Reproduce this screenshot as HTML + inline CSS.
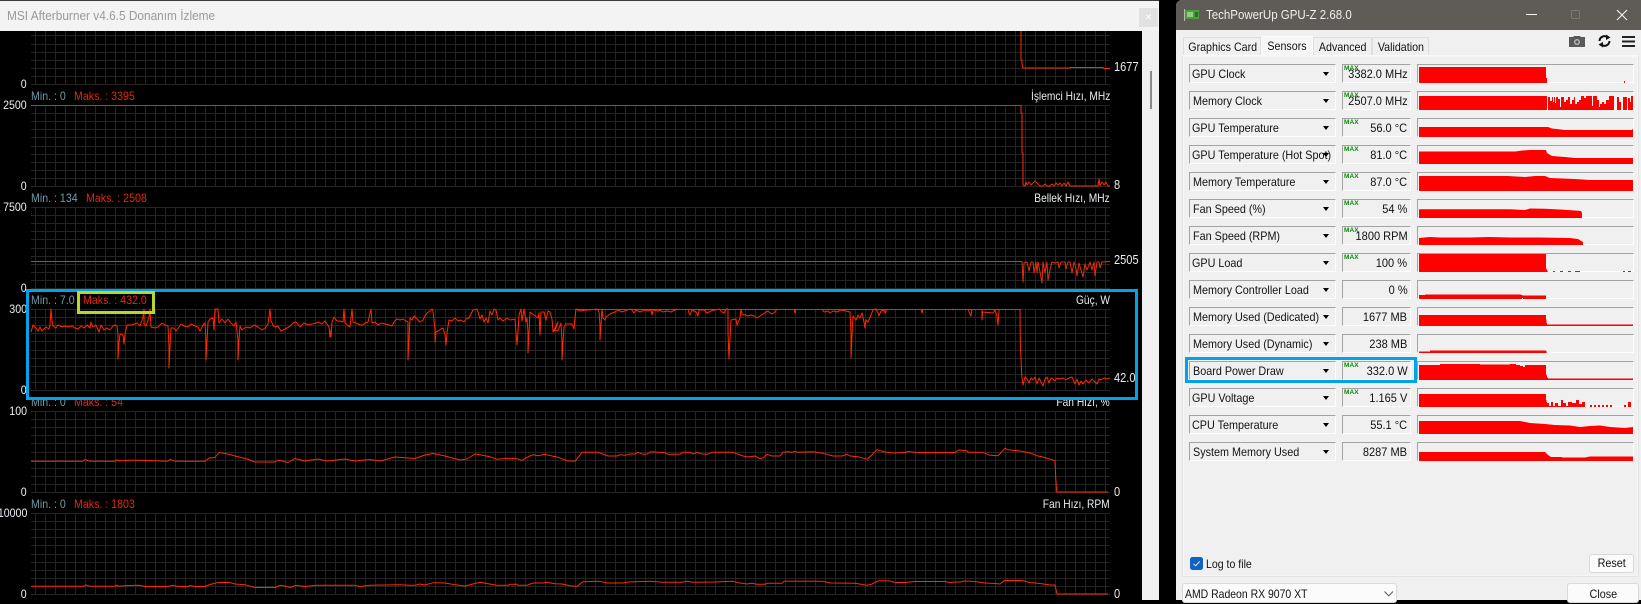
<!DOCTYPE html>
<html><head><meta charset="utf-8"><title>MSI Afterburner / GPU-Z</title>
<style>
html,body{margin:0;padding:0;width:1641px;height:600px;overflow:hidden;background:#000;font-family:"Liberation Sans",sans-serif}
.a{position:absolute}
.t{position:absolute;white-space:nowrap;line-height:14px;font-size:12px;transform:scaleX(.885);transform-origin:left center}
.rt{transform-origin:right center;text-align:right}
.nm{transform:scaleX(.85)}
.mn{color:#6f9aa6}.mx{color:#e4260c}.w{color:#e9eef2}
.r{position:absolute;left:0;width:1641px;height:19px}
.d,.v,.g{position:absolute;top:0;height:19px;box-sizing:border-box;border-top:1.5px solid #a3a3a3;border-left:1.5px solid #a3a3a3;border-right:1px solid #fff;border-bottom:1px solid #fff;background:#f0f0f0}
.d{left:1189px;width:147px}.v{left:1342px;width:69px}.g{left:1417px;width:217px}
.d i{position:absolute;left:133px;top:7px;width:0;height:0;border-left:3.5px solid transparent;border-right:3.5px solid transparent;border-top:4px solid #000}
.l{position:absolute;left:2px;top:1px;line-height:16px;font-size:12px;color:#111;white-space:nowrap;transform:scaleX(.9);transform-origin:left center}
.n{position:absolute;right:2.5px;top:1px;line-height:16px;font-size:12px;color:#111;white-space:nowrap;transform:scaleX(.92);transform-origin:right center}
.m{position:absolute;left:1px;top:0;font-size:6.5px;line-height:8px;font-weight:bold;color:#0a8a0a;letter-spacing:.1px}
.tab{position:absolute;box-sizing:border-box;background:#f0f0f0;border:1px solid #dedede;border-bottom:none;font-size:12px;color:#111;text-align:center;line-height:18px;white-space:nowrap}
.tab span{display:inline-block;transform:scaleX(.89)}
</style></head><body>

<!-- MSI window -->
<div class="a" style="left:0;top:0;width:1159px;height:600px;background:#000"></div>
<div class="a" style="left:0;top:0;width:1159px;height:1px;background:#3a3a3a"></div>

<svg class="a" style="left:0;top:0" width="1142" height="600" viewBox="0 0 1142 600">
<defs>
<pattern id="vl" patternUnits="userSpaceOnUse" x="35" y="0" width="10" height="100"><rect width="1" height="100" fill="#242424"/></pattern>
<g id="grid" shape-rendering="crispEdges">
<rect x="35" y="0" width="1071" height="81" fill="url(#vl)"/>
<path d="M31 .5H1110M31 8.5H1110M31 16.5H1110M31 24.5H1110M31 32.5H1110M31 41.5H1110M31 49.5H1110M31 57.5H1110M31 65.5H1110M31 73.5H1110M31 81.5H1110" stroke="#242424" stroke-width="1" fill="none"/>
</g>
</defs>
<use href="#grid" y="3"/><use href="#grid" y="105"/><use href="#grid" y="207"/><use href="#grid" y="309"/><use href="#grid" y="411"/><use href="#grid" y="513"/>
<g fill="none" stroke-width="1" shape-rendering="crispEdges">
<path d="M31 105.5H1021" stroke="#6b6a14"/>
<path d="M575 309.5H1021" stroke="#6b6a14"/>
</g>
<g fill="none" stroke="#ff2a00" stroke-width="1" stroke-linejoin="round">
<path d="M1021 31V60H1022V64L1023 68H1070V67.5H1103L1104 68.5H1110"/>
<path d="M1021 105V113H1022V153H1023V185L1025 186 1026 182 1027 185 1029 182 1031 185 1033 183 1035 181 1037 183 1038 184 1040 186 1043 186 1045 184 1047 186 1050 186 1052 184 1054 186 1056 183 1058 185 1060 183 1062 186 1064 183 1066 186 1068 182 1070 186 1098 186 1099 179 1100 186 1102 182 1104 185 1106 182 1108 186 1110 186"/>
<path stroke="#e0300f" d="M31 261.5H1022L1023 282 1024 263 1027 262 1029 271 1031 262 1033 262 1034 273 1036 262 1037 273 1038 262 1040 272 1042 283 1043 262 1045 273 1047 262 1048 280 1050 270 1052 262 1055 263 1058 262 1059 268 1061 262 1065 262 1066 269 1068 262 1070 262 1072 273 1074 262 1076 268 1077 276 1079 263 1081 270 1083 277 1085 264 1087 270 1090 262 1092 270 1094 262 1095 276 1097 262 1099 262 1100 268 1102 262 1110 261.5"/>
<path d="M31 332 33 325 36 328 38 331 40 327 42 331 44 329 46 327 49 329 50 325 51 309 52 321 53 326 56 328 58 325 62 327 65 326 68 327 72 326 75 328 78 329 81 326 84 328 87 325 90 328 91 322 93 327 96 325 99 332 101 325 104 330 107 328 110 330 113 326 115 325 117 326 118 335 118 359 119 343 120 334 123 335 124 344 125 334 127 325 132 325 137 323 140 326 143 317 144 309 144 324 146 326 149 317 150 309 151 327 155 328 158 327 162 323 165 325 168 326 169 347 169 368 170 347 171 328 174 328 176 331 179 327 181 324 184 326 188 327 191 324 195 326 198 327 200 331 203 325 205 323 206 341 206 360 207 341 208 322 210 319 213 318 214 330 215 309 218 309 219 323 222 319 225 323 228 319 231 323 234 326 236 322 238 340 238 360 239 340 240 326 242 330 246 327 250 328 254 325 258 327 262 330 265 328 268 324 270 309 271 321 274 327 278 326 281 331 285 329 289 327 293 323 296 322 300 327 304 323 308 325 312 324 316 323 319 322 322 324 325 321 327 324 329 327 330 337 331 330 331 337 332 322 334 317 337 321 340 321 343 322 344 309 345 323 348 326 350 327 352 309 353 322 356 323 360 325 363 325 365 323 368 322 371 309 372 323 375 322 378 325 382 323 385 324 389 325 392 326 394 322 397 319 400 320 403 319 406 321 408 322 408 340 408 360 409 340 410 318 412 320 414 316 417 319 420 322 423 320 425 316 427 313 430 311 432 309 433 311 435 330 435 342 436 332 438 331 441 329 443 328 445 335 446 345 447 333 449 320 452 321 455 318 458 321 461 320 464 322 466 319 469 318 471 314 473 310 477 309 478 312 480 319 482 315 484 322 486 318 488 323 490 311 492 315 494 309 496 310 498 320 500 318 503 321 507 318 510 320 515 319 516 332 517 345 518 332 519 315 521 309 522 321 524 309 526 322 527 318 528 333 528 353 529 333 530 312 534 315 538 318 539 313 540 335 541 312 544 312 546 320 548 311 550 312 552 319 553 331 556 328 558 322 553 332 555 330 558 331 561 323 562 342 562 360 563 342 564 327 566 324 572 324 574 329 575 318 576 309 580 311 585 310 589 310 597 309 599 312 600 325 600 340 601 325 602 309 603 318 605 320 606 317 610 314 612 313 615 312 618 310 622 312 627 310 631 309 634 313 636 310 640 312 644 310 648 311 651 310 652 315 653 310 658 311 660 310 663 312 667 311 671 312 675 310 677 309"/>
<path d="M688 309 689 313 690 315 692 310 696 312 698 316 699 310 704 310 707 313 711 311 715 310 719 309 722 312 724 313 726 309 728 309 728 333 729 359 730 338 731 320 736 319 737 325 740 318 741 309 742 314 745 315 748 316 751 315 754 316 757 318 760 316 763 314 766 312 768 311 770 313 772 314 775 312 777 309"/>
<path d="M794 309 795 313 796 309M822 309 824 312 828 311 830 313 833 311 837 312 841 310 846 311 850 312 851 333 851 358 852 335 853 316 856 320 858 315 860 318 862 313 864 322 865 328 866 320 868 322 871 315 873 310 875 309 876 309 878 313 879 316 881 311 884 310 885 313 887 309M921 309 922 313 923 309M952 309 953 310 954 309M968 309 970 314 971 316 972 309M982 309 982 320 982.6 312 993 313 995 310 996.7 315 998 325 999 310"/>
<path d="M1020 309 1020.3 343 1021.7 375 1023 385 1025 377 1027 379 1029 383 1031 378 1033 380 1035 377 1037 384 1039 378 1041 382 1043 386 1045 379 1047 377 1049 383 1051 378 1053 379 1055 381 1057 378 1060 379 1063 378 1066 380 1069 378 1072 377 1075 384 1077 379 1079 385 1081 381 1083 384 1086 380 1089 383 1092 379 1095 382 1097 384 1099 379 1101 380 1104 378 1107 379 1110 378"/>
<path d="M31 461.3 83 461.3 85 459.5 90 461.3 115 461.3 117 460 120 461 128 460.3 140 460.3 168 461.3 170 459.3 175 461.3 205 461.3 209 458 215 457.5 219 452.5 228 454 235 456 247 459 255 462 275 462 278 460 288 462.5 295 458.5 305 461 318 459 327 461 345 459 355 461 370 459.5 380 461 395 457 415 458.5 425 455 433 453.5 445 456 460 460 467 459 475 454 480 454.7 490 456.7 497 459.3 508 458.3 517 458.7 522 460.3 527 457.3 533 454.7 538 455.7 545 454.3 552 456 558 457.3 567 460.7 575 461.3 582 452.3 598 452.3 608 456 617 456 620 454.7 625 455.3 630 454 635 454 638 452.3 643 454.3 647 454 651 451.7 665 452.7 668 454.3 680 454.3 683 452.3 690 452.3 693 454 697 452.3 702 454 707 454.3 710 453.3 713 452.3 733 452.3 743 456 748 457 755 456 760 458.7 763 458 767 454.3 772 456 780 456 783 452.3 788 451.7 792 452.3 795 451.3 798 452.3 813 451.7 823 453.3 833 456 842 456 847 454.3 850 456 858 456.7 867 459.3 872 454.7 877 449.7 880 450.7 885 452 890 452.6 895 453 905 452.4 908 451.5 917 452.5 955 452.5 958.7 450 966.7 450.7 968 452.3 983 452.3 990 455.3 998 455.7 1005 448.3 1008 449.7 1020 451 1030 453 1037 455.7 1043 457 1055 460.7 1055.7 477 1056.7 492 1108 492"/>
<path d="M31 586.3 84 586.3 86 585 90 586.3 115 586.3 117 585 118 586.3 128 585.5 140 585.3 145 586.5 168 586.5 172 585.3 178 586.5 188 586.5 190 585.5 195 586.5 205 586.5 210 584.5 218 582.5 230 582.5 235 584 245 584.7 255 587.5 275 587.5 280 585.3 285 586 290 587.5 296 585.3 305 586.5 317 585.3 355 585.3 360 586.5 370 585.3 385 585 400 584.7 410 585.3 415 585.3 420 584 425 585 433 582.7 445 583 455 584.7 465 586 475 583.5 480 582.3 488 583.7 497 585.3 508 585.3 510 584.3 517 584.3 518 585.3 527 585.3 533 583 543 583 547 582.3 555 583.7 562 584 570 585.7 577 586.3 583 581.7 600 581.3 607 583 623 583 628 582 650 581.3 663 582.3 682 582.3 687 581.3 693 582.3 715 582 733 581.3 740 583 747 584 752 583.3 757 584.3 765 584.3 767 583.3 782 583.3 784 581.3 823 581.3 830 583 855 583.3 867 585.3 872 584 877 581.3 880 580.7 890 581 895 582.5 905 582.5 915 581.5 945 581.5 950 582.5 955 582 960 582 965 581 975 581.5 985 583 995 583.5 1000 584 1003 581.5 1005 580.5 1022 580.5 1030 582.5 1040 583.5 1050 585 1055 585 1057 594 1108 594"/>
</g>
</svg>

<!-- Title bar MSI -->
<div class="a" style="left:0;top:1px;width:1159px;height:30px;background:#f3f3f3"></div>
<div class="t" style="left:7px;top:9px;color:#9a9a9a;font-size:12.5px;transform:scaleX(.948)">MSI Afterburner v4.6.5 Donanım İzleme</div>
<div class="a" style="left:1139px;top:8px;width:19px;height:19px;background:#e1e1e1;color:#fff;font-size:12px;line-height:18px;text-align:center">×</div>
<div class="a" style="left:1142px;top:31px;width:17px;height:569px;background:#f0f0f0"></div>
<div class="a" style="left:1150px;top:71px;width:2px;height:38px;background:#8a8a8a"></div>

<!-- Scale labels -->
<div class="t rt w" style="right:1614px;top:77px">0</div>
<div class="t rt w" style="right:1614px;top:98px">2500</div>
<div class="t rt w" style="right:1614px;top:179px">0</div>
<div class="t rt w" style="right:1614px;top:200px">7500</div>
<div class="t rt w" style="right:1614px;top:281px">0</div>
<div class="t rt w" style="right:1614px;top:302px">300</div>
<div class="t rt w" style="right:1614px;top:383px">0</div>
<div class="t rt w" style="right:1614px;top:404px">100</div>
<div class="t rt w" style="right:1614px;top:485px">0</div>
<div class="t rt w" style="right:1614px;top:506px">10000</div>
<div class="t rt w" style="right:1614px;top:587px">0</div>

<!-- Current values -->
<div class="t w" style="left:1114px;top:60px;font-size:12.5px">1677</div>
<div class="t w" style="left:1114px;top:178px;font-size:12.5px">8</div>
<div class="t w" style="left:1114px;top:253px;font-size:12.5px">2505</div>
<div class="t w" style="left:1114px;top:371px;font-size:12.5px">42.0</div>
<div class="t w" style="left:1114px;top:485px;font-size:12.5px">0</div>
<div class="t w" style="left:1114px;top:587px;font-size:12.5px">0</div>

<!-- Min/Max -->
<div class="t mn" style="left:31px;top:89px">Min. : 0</div><div class="t mx" style="left:73.5px;top:89px">Maks. : 3395</div>
<div class="t mn" style="left:31px;top:191px">Min. : 134</div><div class="t mx" style="left:85.5px;top:191px">Maks. : 2508</div>
<div class="t mn" style="left:31px;top:293px">Min. : 7.0</div><div class="t mx" style="left:82.5px;top:293px">Maks. : 432.0</div>
<div class="t mn" style="left:31px;top:395px">Min. : 0</div><div class="t mx" style="left:73.5px;top:395px">Maks. : 54</div>
<div class="t mn" style="left:31px;top:497px">Min. : 0</div><div class="t mx" style="left:73.5px;top:497px">Maks. : 1803</div>

<!-- Names -->
<div class="t rt w nm" style="right:531px;top:89px">İşlemci Hızı, MHz</div>
<div class="t rt w nm" style="right:531px;top:191px">Bellek Hızı, MHz</div>
<div class="t rt w nm" style="right:531px;top:293px">Güç, W</div>
<div class="t rt w nm" style="right:531px;top:395px">Fan Hızı, %</div>
<div class="t rt w nm" style="right:531px;top:497px">Fan Hızı, RPM</div>

<!-- Annotation boxes -->
<div class="a" style="left:26px;top:289px;width:1112px;height:111px;box-sizing:border-box;border:3px solid #00a2e8"></div>
<div class="a" style="left:77px;top:291px;width:78px;height:23px;box-sizing:border-box;border:3px solid #b5d92a"></div>

<!-- GPU-Z window -->
<div class="a" style="left:1176px;top:0;width:465px;height:600px;background:#f0f0f0;border-top-left-radius:6px;overflow:hidden">
  <div class="a" style="left:0;top:0;width:465px;height:30px;background:#5f5b56"></div>
</div>
<svg class="a" style="left:1184px;top:8px" width="16" height="14" viewBox="0 0 16 14"><rect x="1" y="2" width="14" height="9" fill="#4f9a45"/><rect x="3" y="4" width="6" height="5" fill="#8fd07a"/><rect x="11" y="4" width="3" height="5" fill="#2f6a2a"/><rect x="0" y="1" width="1" height="12" fill="#b8b8b0"/></svg>
<div class="t" style="left:1206px;top:7.5px;color:#f0efed;font-size:12.5px;transform:scaleX(.92)">TechPowerUp GPU-Z 2.68.0</div>
<svg class="a" style="left:1520px;top:4px" width="121" height="22" viewBox="0 0 121 22" fill="none"><path d="M6 10.5H17" stroke="#f4f4f4" stroke-width="1"/><rect x="51.5" y="6.5" width="8" height="8" rx="1" stroke="#7d7975"/><path d="M97 6L107 16M107 6L97 16" stroke="#f4f4f4" stroke-width="1.1"/></svg>

<!-- Tabs -->
<div class="a" style="left:1182px;top:55px;width:457px;height:522px;box-sizing:border-box;border:1px solid #e3e3e3;border-top:1px solid #fafafa;box-shadow:inset 0 0 0 1px #f6f6f6"></div>
<div class="tab" style="left:1183px;top:37px;width:78px;height:18px"><span>Graphics Card</span></div>
<div class="tab" style="left:1261px;top:35.5px;width:52px;height:20px;background:#f6f6f6;border-color:#fafafa"><span>Sensors</span></div>
<div class="tab" style="left:1313px;top:37px;width:59px;height:18px"><span>Advanced</span></div>
<div class="tab" style="left:1372px;top:37px;width:57px;height:18px"><span>Validation</span></div>

<!-- Toolbar icons -->
<svg class="a" style="left:1568px;top:34px" width="70" height="14" viewBox="0 0 70 14">
<path d="M1 3H5L6 2H12L13 3H17V13H1Z" fill="#5a5a5a"/><circle cx="9" cy="8" r="3" fill="#b9b9b9"/><circle cx="9" cy="8" r="1.6" fill="#5a5a5a"/>
<path d="M31.5 7A5 5 0 0 1 39.5 3.2M41.5 7A5 5 0 0 1 33.5 10.8" stroke="#111" stroke-width="2" fill="none"/><path d="M38 0.5L42.5 3.5L38 6ZM35 8L30.5 10.5L35 13.5Z" fill="#111"/>
<path d="M54 3H67M54 7.5H67M54 12H67" stroke="#222" stroke-width="2"/>
</svg>

<!-- Rows -->
<div class="r" style="top:64px"><div class="d"><span class="l">GPU Clock</span><i></i></div><div class="v"><span class="m">MAX</span><span class="n">3382.0 MHz</span></div><div class="g"></div></div>
<div class="r" style="top:91px"><div class="d"><span class="l" style="left:3px">Memory Clock</span><i></i></div><div class="v"><span class="m">MAX</span><span class="n">2507.0 MHz</span></div><div class="g"></div></div>
<div class="r" style="top:118px"><div class="d"><span class="l">GPU Temperature</span><i></i></div><div class="v"><span class="m">MAX</span><span class="n">56.0 °C</span></div><div class="g"></div></div>
<div class="r" style="top:145px"><div class="d"><span class="l">GPU Temperature (Hot Spot)</span><i></i></div><div class="v"><span class="m">MAX</span><span class="n">81.0 °C</span></div><div class="g"></div></div>
<div class="r" style="top:172px"><div class="d"><span class="l" style="left:3px">Memory Temperature</span><i></i></div><div class="v"><span class="m">MAX</span><span class="n">87.0 °C</span></div><div class="g"></div></div>
<div class="r" style="top:199px"><div class="d"><span class="l" style="left:3px">Fan Speed (%)</span><i></i></div><div class="v"><span class="m">MAX</span><span class="n">54 %</span></div><div class="g"></div></div>
<div class="r" style="top:226px"><div class="d"><span class="l" style="left:3px">Fan Speed (RPM)</span><i></i></div><div class="v"><span class="m">MAX</span><span class="n">1800 RPM</span></div><div class="g"></div></div>
<div class="r" style="top:253px"><div class="d"><span class="l">GPU Load</span><i></i></div><div class="v"><span class="m">MAX</span><span class="n">100 %</span></div><div class="g"></div></div>
<div class="r" style="top:280px"><div class="d"><span class="l" style="left:3px">Memory Controller Load</span><i></i></div><div class="v"><span class="n">0 %</span></div><div class="g"></div></div>
<div class="r" style="top:307px"><div class="d"><span class="l" style="left:3px">Memory Used (Dedicated)</span><i></i></div><div class="v"><span class="n">1677 MB</span></div><div class="g"></div></div>
<div class="r" style="top:334px"><div class="d"><span class="l" style="left:3px">Memory Used (Dynamic)</span><i></i></div><div class="v"><span class="n">238 MB</span></div><div class="g"></div></div>
<div class="r" style="top:361px"><div class="d"><span class="l" style="left:3px">Board Power Draw</span><i></i></div><div class="v"><span class="m">MAX</span><span class="n">332.0 W</span></div><div class="g"></div></div>
<div class="r" style="top:388px"><div class="d"><span class="l">GPU Voltage</span><i></i></div><div class="v"><span class="m">MAX</span><span class="n">1.165 V</span></div><div class="g"></div></div>
<div class="r" style="top:415px"><div class="d"><span class="l">CPU Temperature</span><i></i></div><div class="v"><span class="n">55.1 °C</span></div><div class="g"></div></div>
<div class="r" style="top:442px"><div class="d"><span class="l" style="left:3px">System Memory Used</span><i></i></div><div class="v"><span class="n">8287 MB</span></div><div class="g"></div></div>

<!-- Sensor graph fills -->
<svg class="a" style="left:0;top:0" width="1641" height="600" viewBox="0 0 1641 600" fill="#f00" shape-rendering="crispEdges">
<path d="M1419 83V67H1546V78H1547V83ZM1624 81H1625V83H1624Z"/>
<path d="M1419 110V96H1547V110ZM1548 110V97H1550V101H1552V97H1553V102H1554V97H1555V103H1556V97H1558V99H1560V107H1561V97H1564V102H1566V100H1568V97H1570V104H1572V100H1574V97H1575V104H1577V102H1579V100H1581V96H1584V98H1586V96H1592V106H1593V96H1597V100H1599V107H1600V104H1602V102H1604V104H1606V100H1609V96H1614V110H1617V97H1619V102H1621V110H1623V97H1627V110H1628V98H1630V102H1631V96H1633V110Z"/>
<path d="M1419 137V127H1548L1552 128.5 1565 130H1632L1633 128.5V137Z" shape-rendering="auto"/>
<path d="M1419 164V151.5H1515L1522 150.5 1530 150H1546L1547 153 1552 156 1565 157 1575 158H1633V164Z" shape-rendering="auto"/>
<path d="M1419 191V176H1508L1525 177 1535 176H1545L1550 178 1575 179 1590 180H1633V191Z" shape-rendering="auto"/>
<path d="M1419 218V209.3H1510L1525 210 1530 208.5 1545 208.7 1560 209.5 1575 210.5 1581 211 1582 213V218Z" shape-rendering="auto"/>
<path d="M1419 245V238L1430 237 1440 237.5 1470 237.5 1490 237 1510 237.5 1540 237.5 1570 238 1578 239 1583 242V245Z" shape-rendering="auto"/>
<path d="M1419 272V254H1546V268L1548 272ZM1553 271h2v1h-2zM1560 271h3v1h-3zM1568 271h3v1h-3zM1575 271h5v1h-5zM1623 271h2v1h-2zM1628 271h3v1h-3z"/>
<path d="M1419 299V295H1425V294.5H1480V294.3H1520L1523 295.5 1526 298H1522V299ZM1523 299V295.5H1546V299Z"/>
<path d="M1419 326V315H1546V318L1547 324.5H1633V326Z"/>
<path d="M1419 353V351.5H1430V350.5H1546L1547 353Z"/>
<path d="M1419 380V365H1440V364H1480V364.5H1510V364H1516V365H1520V366H1523V367H1525V365H1546V374L1548 378.5H1633V380Z"/>
<path d="M1419 407V394H1546V399L1547 403H1549V406H1551V402H1553V406H1555V403H1558V406H1561V400H1563V403H1566V406H1568V402H1572V407ZM1572 407V403H1576V400H1579V404H1582V402H1585V407ZM1590 405h2v2h-2zM1594 405h2v2h-2zM1598 405h2v2h-2zM1602 405h2v2h-2zM1606 405h2v2h-2zM1610 405h2v2h-2zM1624 405h2v2h-2zM1628 402h3v5h-3z"/>
<path d="M1419 434V421H1520L1530 423 1545 424 1555 425 1570 425.5 1580 427 1590 426 1600 425.5 1610 427 1625 428 1633 427V434Z" shape-rendering="auto"/>
<path d="M1419 461V452H1545L1548 455 1551 457H1562V457.5H1585L1590 456.5H1633V461Z" shape-rendering="auto"/>
</svg>

<!-- Blue box on GPU-Z -->
<div class="a" style="left:1185px;top:357px;width:232px;height:26px;box-sizing:border-box;border:3px solid #00a2e8"></div>

<!-- Bottom controls -->
<div class="a" style="left:1190px;top:557px;width:13px;height:13px;background:#1063c0;border-radius:2.5px"></div>
<svg class="a" style="left:1190px;top:557px" width="13" height="13" viewBox="0 0 13 13"><path d="M3.5 6.8L5.6 8.8L9.8 4.4" fill="none" stroke="#dfeaf7" stroke-width="1"/></svg>
<div class="t" style="left:1206px;top:557px;color:#111;transform:scaleX(.88)">Log to file</div>
<div class="a" style="left:1589px;top:554px;width:45px;height:18.5px;box-sizing:border-box;background:#fbfbfb;border:1px solid #d9d9d9;border-radius:3px;font-size:12px;line-height:17px;text-align:center;color:#111"><span style="display:inline-block;transform:scaleX(.9)">Reset</span></div>
<div class="a" style="left:1182px;top:583px;width:214.5px;height:20px;box-sizing:border-box;background:#fbfbfb;border:1px solid #d9d9d9;border-radius:3px"></div>
<div class="t" style="left:1185px;top:587px;color:#111;transform:scaleX(.87)">AMD Radeon RX 9070 XT</div>
<svg class="a" style="left:1383px;top:590px" width="12" height="8" viewBox="0 0 12 8"><path d="M1.5 1.5L5.8 5.8L10 1.5" fill="none" stroke="#555" stroke-width="1"/></svg>
<div class="a" style="left:1567px;top:583px;width:72px;height:20px;box-sizing:border-box;background:#fbfbfb;border:1px solid #d9d9d9;border-radius:3px;font-size:12px;line-height:20px;text-align:center;color:#111"><span style="display:inline-block;transform:scaleX(.9)">Close</span></div>

</body></html>
